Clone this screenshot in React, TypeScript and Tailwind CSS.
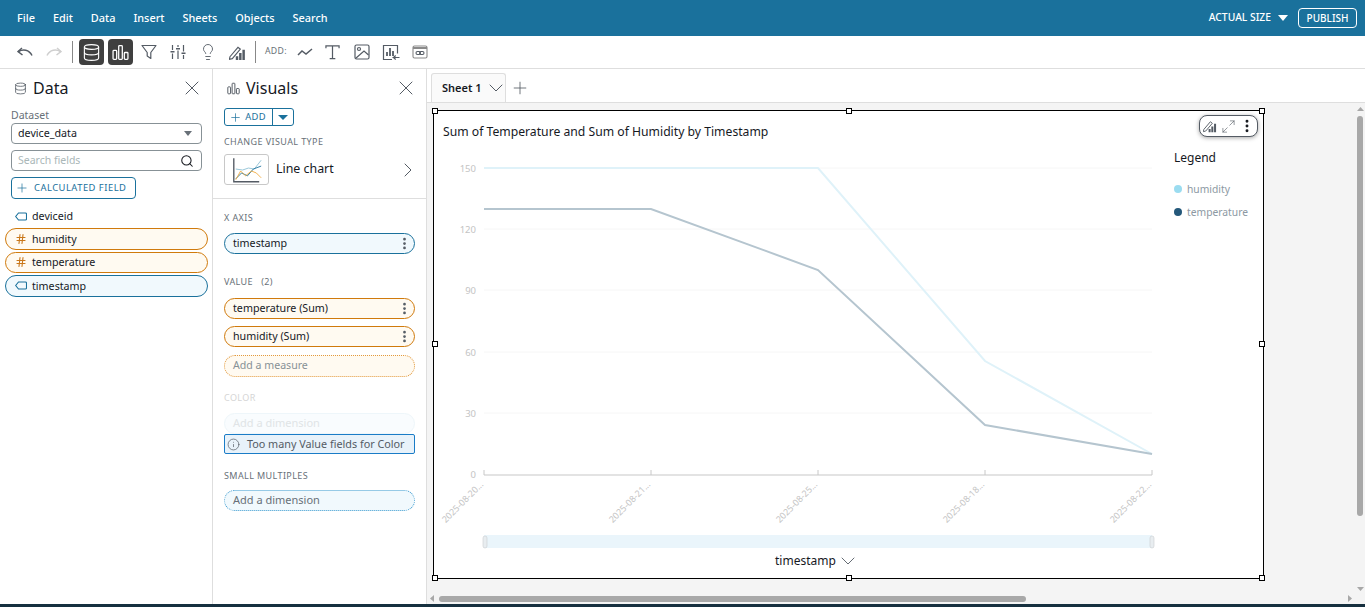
import React from 'react';
import { ChevronDown, ChevronRight, Plus, Search, X, Lightbulb, Info, EllipsisVertical, Database, Maximize2, Hash } from 'lucide-react';

const font = { fontFamily: '"Noto Sans", sans-serif' };

const BarsIcon = ({ className = '' }: { className?: string }) => (
  <svg viewBox="0 0 16 16" className={className} fill="none" stroke="currentColor" strokeWidth="1.2">
    <rect x="1" y="6" width="3.4" height="8.5" rx="0.8" />
    <rect x="6.3" y="1.5" width="3.4" height="13" rx="0.8" />
    <rect x="11.6" y="8" width="3.4" height="6.5" rx="0.8" />
  </svg>
);

const TagIcon = () => (
  <svg viewBox="0 0 12 9" className="h-[9px] w-[12px] shrink-0 text-[#1a719c]" fill="none" stroke="currentColor" strokeWidth="1.1">
    <path d="M3.500 1h7a1 1 0 0 1 1 1v5a1 1 0 0 1-1 1h-7L.7 4.500z" />
  </svg>
);

const PencilBars = ({ className = '' }: { className?: string }) => (
  <svg viewBox="0 0 18 18" className={className} fill="none" stroke="currentColor" strokeWidth="1.2">
    <path d="M1 13.500 9.500 3.500l2.500 2-8.500 10-3 .8z" />
    <path d="M8.500 17v-4M12 17V9.500M15.500 17V6" strokeWidth="2.600" />
  </svg>
);

const FieldRow = ({ label, kind }: { label: string; kind: 'dim' | 'measure' }) => (
  <div className={`flex h-[21.500px] items-center gap-[5px] rounded-full border pl-[9px] text-[10.700px] text-[#16191f] ${kind === 'dim' ? 'border-[#1a719c] bg-[#f1f9fd]' : 'border-[#d07a0c] bg-[#fffaf1]'}`}>
    {kind === 'dim' ? <TagIcon /> : <Hash size={12} className="w-[12px] shrink-0 text-[#c9771a]" strokeWidth={2.200} />}
    {label}
  </div>
);

const Well = ({ label, kind }: { label: string; kind: 'dim' | 'measure' }) => (
  <div className={`flex h-[21px] items-center justify-between rounded-full border pl-[8px] pr-[2px] text-[10.700px] text-[#16191f] ${kind === 'dim' ? 'border-[#1a719c] bg-[#f1f9fd]' : 'border-[#d07a0c] bg-[#fffaf1]'}`}>
    {label}
    <EllipsisVertical size={15} className="text-[#545b64]" strokeWidth={2.400} />
  </div>
);

const SectionLabel = ({ children, faded }: { children: React.ReactNode; faded?: boolean }) => (
  <div className={`text-[9px] leading-[12px] tracking-[0.4px] ${faded ? 'text-[#d5d5d5]' : 'text-[#687078]'}`}>{children}</div>
);

const Handle = ({ className }: { className: string }) => (
  <div className={`absolute h-[6px] w-[6px] border border-black bg-white ${className}`} />
);

const xs = [484, 651, 818, 985, 1152].map((x) => x - 434);
const ticks = [
  { v: '150', y: 57 },
  { v: '120', y: 118 },
  { v: '90', y: 179 },
  { v: '60', y: 241 },
  { v: '30', y: 302 },
];

const ChartSvg = () => (
  <svg width="829" height="467" className="absolute left-0 top-0" style={font}>
    {ticks.map((t) => (
      <g key={t.v}>
        <line x1={50} x2={718} y1={t.y} y2={t.y} stroke="#f6f6f6" />
        <text x={42} y={t.y + 4} textAnchor="end" fontSize="9.500" fill="#c4c4c4">{t.v}</text>
      </g>
    ))}
    <text x={42} y={367} textAnchor="end" fontSize="9.500" fill="#c4c4c4">0</text>
    <line x1={50} x2={718} y1={364} y2={364} stroke="#c8c8c8" strokeWidth="1.200" />
    {xs.map((x) => <line key={x} x1={x} x2={x} y1={359} y2={364} stroke="#c8c8c8" />)}
    <polyline points="50,57 384,57 551,250 718,343" fill="none" stroke="#dff2f9" strokeWidth="2" />
    <polyline points="50,98 217,98 384,159 551,314 718,343" fill="none" stroke="#b5c5cf" strokeWidth="2" />
    {['2025-08-20...', '2025-08-21...', '2025-08-25...', '2025-08-18...', '2025-08-22...'].map((l, i) => (
      <text key={l} transform={`translate(${xs[i]} 374) rotate(-45)`} textAnchor="end" fontSize="9" fill="#c4c4c4">{l}</text>
    ))}
    <rect x={50} y={424} width={668} height={13} fill="#eaf5fb" />
    <rect x={49} y={425} width={4} height={12} rx={2} fill="#e8edf0" stroke="#c9cdd0" strokeWidth="0.600" />
    <rect x={716} y={425} width={4} height={12} rx={2} fill="#e8edf0" stroke="#c9cdd0" strokeWidth="0.600" />
  </svg>
);

const LineChartThumb = () => (
  <svg viewBox="0 0 44 30" className="h-[30px] w-[44px]" fill="none">
    <path d="M9 3v24h26" stroke="#545b64" strokeWidth="1.400" />
    <path d="M11 14l7 1 6-2 6 1 7-9" stroke="#8cbfd4" strokeWidth="0.900" />
    <path d="M11 24l6-6 6 3 6-7 8-3" stroke="#1a719c" strokeWidth="0.900" />
    <path d="M11 25l5-9 5 5 6-5 5 2 5 5" stroke="#f0a93b" strokeWidth="0.900" />
  </svg>
);

export default function App() {
  return (
    <div className="flex h-[607px] w-[1365px] flex-col overflow-hidden bg-white" style={font}>
      {/* Top menu */}
      <header className="flex h-[36px] shrink-0 items-center justify-between bg-[#1a719c] pl-[17px] pr-[8px] text-white">
        <nav className="flex gap-[18px] text-[10.900px] font-medium">
          {['File', 'Edit', 'Data', 'Insert', 'Sheets', 'Objects', 'Search'].map((m) => <span key={m}>{m}</span>)}
        </nav>
        <div className="flex items-center">
          <span className="text-[10.300px] font-medium">ACTUAL SIZE</span>
          <svg viewBox="0 0 10 6" className="ml-[7px] h-[6px] w-[10px]" fill="white"><path d="M0 0h10L5 6z" /></svg>
          <span className="ml-[10px] flex h-[20px] w-[59px] items-center justify-center rounded-[4px] border border-white text-[10px] font-medium">PUBLISH</span>
        </div>
      </header>

      {/* Toolbar */}
      <div className="flex h-[33px] shrink-0 items-center border-b border-[#dedede] pl-[17px] text-[#545b64]">
        <svg viewBox="0 0 16 10" className="h-[10px] w-[16px]" fill="none" stroke="currentColor" strokeWidth="1.500">
          <path d="M5 1 1 4.500 5.500 8" /><path d="M1.500 4.500C6 2 12 2.500 15 8.500" />
        </svg>
        <svg viewBox="0 0 16 10" className="ml-[13px] h-[10px] w-[16px] text-[#cfcfcf]" fill="none" stroke="currentColor" strokeWidth="1.500">
          <path d="M11 1l4 3.500L10.500 8" /><path d="M14.500 4.500C10 2 4 2.500 1 8.500" />
        </svg>
        <div className="ml-[10px] h-[22px] w-px bg-[#888]" />
        <div className="ml-[6px] flex h-[26px] w-[25px] items-center justify-center rounded-[4px] bg-[#3f3f3f] text-white"><Database size={19} strokeWidth={1.400} /></div>
        <div className="ml-[4px] flex h-[26px] w-[25px] items-center justify-center rounded-[4px] bg-[#3f3f3f] text-white"><BarsIcon className="h-[17px] w-[17px]" /></div>
        <svg viewBox="0 0 16 16" className="ml-[8px] h-[16px] w-[16px]" fill="none" stroke="currentColor" strokeWidth="1.200" strokeLinejoin="round">
          <path d="M1 1.500h14L9.800 8.500v6L6.200 12V8.500z" />
        </svg>
        <svg viewBox="0 0 16 16" className="ml-[13px] h-[16px] w-[16px]" fill="none" stroke="currentColor" strokeWidth="1.200">
          <path d="M2.500 1v5M2.500 9.500V15M8 1v2M8 6.500V15M13.500 1v6.500M13.500 11v4" />
          <path d="M.5 7.800h4M6 4.800h4M11.500 9.300h4" strokeWidth="1.500" />
        </svg>
        <Lightbulb size={18} strokeWidth={1.200} className="ml-[13px]" />
        <PencilBars className="ml-[12px] h-[17px] w-[17px]" />
        <div className="ml-[9px] h-[22px] w-px bg-[#888]" />
        <span className="ml-[9px] text-[8.700px] tracking-[0.3px] text-[#687078]">ADD:</span>
        <svg viewBox="0 0 16 10" className="ml-[10px] h-[10px] w-[16px]" fill="none" stroke="currentColor" strokeWidth="1.500"><path d="M1 8l4-4 4 3 6-5" /></svg>
        <svg viewBox="0 0 16 16" className="ml-[12px] h-[16px] w-[15px]" fill="none" stroke="currentColor" strokeWidth="1.300">
          <path d="M1 4V1.500h14V4M8 1.500V15M5 15h6" />
        </svg>
        <svg viewBox="0 0 16 16" className="ml-[14px] h-[16px] w-[16px]" fill="none" stroke="currentColor" strokeWidth="1.200">
          <rect x="1" y="1" width="14" height="14" rx="1.500" /><circle cx="5" cy="5" r="1.500" /><path d="M1.500 14.500 10 7l4.500 4" />
        </svg>
        <svg viewBox="0 0 18 17" className="ml-[12px] h-[17px] w-[18px]" fill="none" stroke="currentColor" strokeWidth="1.200">
          <path d="M10 15.500H1.500v-14h14v8" /><path d="M5 12V8M8 12V4M11 12V7" strokeWidth="1.800" /><path d="M17.500 13.500h-6l2.200-2M11.500 13.500l2.200 2" />
        </svg>
        <svg viewBox="0 0 16 14" className="ml-[12px] h-[14px] w-[16px]" fill="none" stroke="#8a8a8a" strokeWidth="1.100">
          <rect x="1" y="1" width="14" height="12" rx="1.500" /><path d="M1 3h14" strokeWidth="2" /><rect x="4" y="6.500" width="4.500" height="3" rx="1.500" stroke="#545b64" /><rect x="7.500" y="6.500" width="4.500" height="3" rx="1.500" stroke="#545b64" />
        </svg>
      </div>

      <div className="flex min-h-0 flex-1">
        {/* Data panel */}
        <aside className="w-[213px] shrink-0 border-r border-[#dedede] px-[11px]">
          <div className="mb-[2px] flex h-[38px] items-center">
            <Database size={13} strokeWidth={1.500} className="ml-[3px] text-[#545b64]" />
            <span className="ml-[6px] text-[16px] text-[#16191f]">Data</span>
            <X size={24} strokeWidth={1} className="-mr-[3px] ml-auto text-[#545b64]" />
          </div>
          <div className="text-[10.500px] leading-[12px] text-[#687078]">Dataset</div>
          <div className="mt-[2px] flex h-[21px] w-[191px] items-center justify-between rounded-[4px] border border-[#879196] pl-[6px] pr-[9px] text-[10.700px] text-[#16191f]">
            device_data
            <svg viewBox="0 0 8 5" className="h-[5px] w-[8px]" fill="#687078"><path d="M0 0h8L4 5z" /></svg>
          </div>
          <div className="mt-[6px] flex h-[21px] w-[191px] items-center justify-between rounded-[4px] border border-[#879196] pl-[6px] pr-[7px] text-[10.500px] text-[#aab7b8]">
            Search fields
            <Search size={14} strokeWidth={1.800} className="text-[#16191f]" />
          </div>
          <div className="mt-[6px] flex h-[22px] w-[125px] items-center rounded-[4px] border border-[#1a719c] pl-[3px] text-[9.400px] tracking-[0.5px] text-[#1a719c]">
            <Plus size={14} strokeWidth={1.200} className="mr-[5px]" />CALCULATED FIELD
          </div>
          <div className="-ml-[6px] mt-[7px] flex w-[203px] flex-col gap-[2px]">
            <div className="flex h-[20px] items-center gap-[5px] pl-[10px] text-[10.700px] text-[#16191f]"><TagIcon />deviceid</div>
            <FieldRow label="humidity" kind="measure" />
            <FieldRow label="temperature" kind="measure" />
            <FieldRow label="timestamp" kind="dim" />
          </div>
        </aside>

        {/* Visuals panel */}
        <aside className="w-[214px] shrink-0 border-r border-[#dedede]">
          <div className="border-b border-[#dedede] px-[11px] pb-[13px]">
            <div className="mb-[1px] flex h-[38px] items-center">
              <BarsIcon className="ml-[3px] h-[13px] w-[13px] text-[#545b64]" />
              <span className="ml-[6px] text-[16px] text-[#16191f]">Visuals</span>
              <X size={24} strokeWidth={1} className="-mr-[3px] ml-auto text-[#545b64]" />
            </div>
            <div className="flex h-[18px] w-[70px] items-center rounded-[3px] border border-[#1a719c] text-[9.400px] tracking-[0.3px] text-[#1a719c]">
              <span className="flex h-full flex-1 items-center justify-center gap-[3px] border-r border-[#1a719c] pr-[2px]"><Plus size={13} strokeWidth={1.300} />ADD</span>
              <span className="flex w-[20px] items-center justify-center"><svg viewBox="0 0 10 5" className="h-[5px] w-[10px]" fill="#1a719c"><path d="M0 0h10L5 5z" /></svg></span>
            </div>
            <div className="mt-[10px]"><SectionLabel>CHANGE VISUAL TYPE</SectionLabel></div>
            <div className="mt-[6px] flex items-center">
              <div className="flex h-[31px] w-[45px] items-center justify-center rounded-[3px] border border-[#c8c8c8]"><LineChartThumb /></div>
              <span className="ml-[7px] text-[12.400px] text-[#16191f]">Line chart</span>
              <ChevronRight size={24} strokeWidth={1} className="-mr-[5px] ml-auto text-[#545b64]" />
            </div>
          </div>
          <div className="px-[11px]">
            <div className="mt-[13px]"><SectionLabel>X AXIS</SectionLabel></div>
            <div className="mt-[9px]"><Well label="timestamp" kind="dim" /></div>
            <div className="mt-[22px]"><SectionLabel>VALUE&nbsp;&nbsp;&nbsp;(2)</SectionLabel></div>
            <div className="mt-[10px]"><Well label="temperature (Sum)" kind="measure" /></div>
            <div className="mt-[7px]"><Well label="humidity (Sum)" kind="measure" /></div>
            <div className="mt-[8px] flex h-[22px] items-center rounded-full border border-dotted border-[#e39a3e] bg-[#fffaf1] pl-[8px] text-[10.600px] text-[#879196]">Add a measure</div>
            <div className="mt-[15px]"><SectionLabel faded>COLOR</SectionLabel></div>
            <div className="mt-[9px] flex h-[21px] items-center rounded-full border border-[#eef6fa] bg-[#f9fcfe] pl-[8px] text-[11px] text-[#e0e4e6]">Add a dimension</div>
            <div className="flex h-[20px] items-center rounded-[2px] border border-[#1a7cc7] bg-[#e8f2fa] pl-[2px] text-[10.800px] text-[#545b64]">
              <Info size={13} strokeWidth={1.300} />
              <span className="ml-[7px]">Too many Value fields for Color</span>
            </div>
            <div className="mt-[16px]"><SectionLabel>SMALL MULTIPLES</SectionLabel></div>
            <div className="mt-[8px] flex h-[21px] items-center rounded-full border border-dotted border-[#3c9bd0] bg-[#f1f9fd] pl-[8px] text-[11px] text-[#687078]">Add a dimension</div>
          </div>
        </aside>

        {/* Sheet area */}
        <main className="flex min-w-0 flex-1 flex-col">
          <div className="flex h-[34px] shrink-0 items-end border-b border-[#dedede] pl-[4px]">
            <div className="flex h-[29px] w-[75px] items-center rounded-t-[3px] border border-b-0 border-[#dedede] bg-[#fafafa] pl-[10px] text-[11px] font-semibold text-[#16191f]">
              Sheet 1
              <ChevronDown size={24} strokeWidth={1} className="-mr-[4px] ml-[2px] text-[#545b64]" />
            </div>
            <Plus size={20} strokeWidth={1} className="mb-[4px] ml-[4px] text-[#545b64]" />
          </div>
          <div className="flex min-h-0 flex-1 bg-[#f4f4f4]">
            <div className="flex min-w-0 flex-1 flex-col">
              <div className="min-h-0 flex-1 pl-[6px] pt-[7px]">
                <section className="relative h-[469px] w-[831px] border border-black bg-white">
                  <ChartSvg />
                  <div className="absolute left-[9px] top-[12px] text-[12.200px] text-[#16191f]">Sum of Temperature and Sum of Humidity by Timestamp</div>
                  <div className="absolute left-[740px] top-[38px] text-[12px] text-[#16191f]">Legend</div>
                  <div className="absolute left-[740px] top-[71px] flex flex-col gap-[9px] text-[10.300px] leading-[14px] text-[#8d99a3]">
                    <div className="flex items-center gap-[5px]"><span className="h-[8px] w-[8px] rounded-full bg-[#9bdcf0]" />humidity</div>
                    <div className="flex items-center gap-[5px]"><span className="h-[8px] w-[8px] rounded-full bg-[#24587a]" />temperature</div>
                  </div>
                  <div className="absolute left-[341px] top-[441px] flex items-center text-[12px] text-[#16191f]">
                    timestamp
                    <ChevronDown size={24} strokeWidth={0.900} className="-my-[6px] ml-0 text-[#545b64]" />
                  </div>
                  <div className="absolute left-[765px] top-[4px] flex h-[22px] w-[59px] items-center justify-between rounded-[8px] border border-[#545b64] bg-white pl-[3px] pr-[2px] text-[#545b64] shadow-[0_1px_4px_rgba(0,0,0,0.35)]">
                    <PencilBars className="h-[14px] w-[14px]" />
                    <Maximize2 size={15} strokeWidth={1} />
                    <EllipsisVertical size={16} strokeWidth={2.400} className="text-[#16191f]" />
                  </div>
                  <Handle className="-left-[2px] -top-[3px]" />
                  <Handle className="left-[412px] -top-[3px]" />
                  <Handle className="-right-[2px] -top-[3px]" />
                  <Handle className="-left-[2px] top-[230px]" />
                  <Handle className="-right-[2px] top-[230px]" />
                  <Handle className="-left-[2px] -bottom-[3px]" />
                  <Handle className="left-[412px] -bottom-[3px]" />
                  <Handle className="-right-[2px] -bottom-[3px]" />
                </section>
              </div>
              {/* Horizontal scrollbar */}
              <div className="flex h-[14px] shrink-0 items-center pl-[3px] pr-[3px] pt-[3px]">
                <svg viewBox="0 0 4 7" className="h-[7px] w-[4px]" fill="#a8a8a8"><path d="M4 0v7L0 3.500z" /></svg>
                <div className="ml-[5px] h-[6px] w-[587px] rounded-full bg-[#a8a8a8]" />
                <svg viewBox="0 0 4 7" className="ml-auto h-[7px] w-[4px]" fill="#a8a8a8"><path d="M0 0v7l4-3.500z" /></svg>
              </div>
            </div>
            {/* Vertical scrollbar */}
            <div className="flex w-[10px] shrink-0 flex-col items-center pt-[4px]">
              <svg viewBox="0 0 7 4" className="h-[4px] w-[7px]" fill="#a8a8a8"><path d="M0 4h7L3.500 0z" /></svg>
              <div className="mt-[5px] h-[400px] w-[6px] rounded-full bg-[#a8a8a8]" />
              <svg viewBox="0 0 7 4" className="mb-[13px] mt-auto h-[4px] w-[7px]" fill="#a8a8a8"><path d="M0 0h7L3.500 4z" /></svg>
            </div>
          </div>
        </main>
      </div>
      <div className="h-[3px] shrink-0 bg-[#16303f]" />
    </div>
  );
}
